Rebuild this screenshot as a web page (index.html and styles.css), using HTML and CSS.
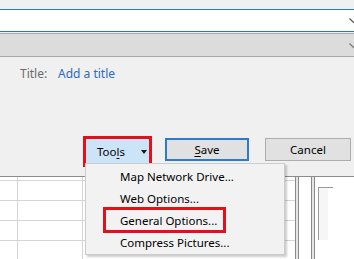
FILE: index.html
```html
<!DOCTYPE html>
<html>
<head>
<meta charset="utf-8">
<link rel="stylesheet" href="styles.css">
</head>
<body>
<div class="dialog">
  <div class="combo">
    <svg class="chev" width="9" height="6" viewBox="0 0 9 6"><path d="M0.5 0.5 L4.5 4.5 L8.5 0.5" fill="none" stroke="#555" stroke-width="1.2"/></svg>
  </div>
  <div class="bar">
    <svg class="chev" width="9" height="6" viewBox="0 0 9 6"><path d="M0.5 0.5 L4.5 4.5 L8.5 0.5" fill="none" stroke="#777" stroke-width="1.2"/></svg>
  </div>
  <div class="title-row">
    <span class="label">Title:</span>
    <span class="link">Add a title</span>
  </div>
  <div class="actions">
    <div class="tools-frame">
      <div class="tools-btn">
        <span>Too<u>l</u>s</span>
        <span class="arrow"></span>
      </div>
    </div>
    <div class="btn save"><u>S</u>ave</div>
    <div class="btn cancel">Cancel</div>
  </div>
</div>
<div class="sheet">
  <div class="grid"></div>
  <div class="split"></div>
  <div class="gap"></div>
  <div class="split"></div>
  <div class="pane"><div class="corner"></div></div>
</div>
<div class="menu">
  <div class="item">Map Network Drive...</div>
  <div class="item">Web Options...</div>
  <div class="item">General Options...</div>
  <div class="item">Compress Pictures...</div>
  <div class="highlight"></div>
</div>
</body>
</html>
```
FILE: styles.css
```css
html, body {
  margin: 0;
  padding: 0;
}
body {
  width: 354px;
  height: 259px;
  overflow: hidden;
  position: relative;
  background: #f0f0f0;
  font-family: "Noto Sans", "DejaVu Sans", sans-serif;
  font-size: 11.5px;
  color: #000;
}
.dialog {
  padding-top: 9px;
  height: 167px;
  border-bottom: 1px solid #8c8c8c;
  box-sizing: content-box;
}
.combo {
  height: 21px;
  background: #fff;
  border-top: 1px solid #2b79c2;
  border-bottom: 1px solid #2b79c2;
  display: flex;
  justify-content: flex-end;
  align-items: center;
}
.bar {
  margin-top: 1px;
  height: 22px;
  background: #dcdcdc;
  border-top: 1px solid #a9a9a9;
  border-bottom: 1px solid #a9a9a9;
  display: flex;
  justify-content: flex-end;
  align-items: center;
}
.chev {
  margin-right: -4px;
  margin-top: 1px;
}
.title-row {
  padding: 9px 0 0 20px;
  height: 16px;
  line-height: 16px;
  display: flex;
  font-size: 12px;
}
.label {
  color: #6b6b6b;
  width: 38px;
}
.link {
  color: #2b6cc4;
}
.actions {
  margin-top: 54px;
  display: flex;
  align-items: flex-start;
  height: 31px;
}
.tools-frame {
  margin-left: 83px;
  width: 69px;
  height: 31px;
  box-sizing: border-box;
  border: 3px solid #e3101b;
  background: #cce4f7;
}
.tools-btn {
  height: 25px;
  display: flex;
  align-items: center;
  padding-left: 11px;
  line-height: 16px;
}
.tools-btn u {
  text-underline-offset: 2px;
}
.arrow {
  margin-left: 16px;
  width: 0;
  height: 0;
  border-left: 3.5px solid transparent;
  border-right: 3.5px solid transparent;
  border-top: 4px solid #1a1a1a;
}
.btn {
  height: 23px;
  box-sizing: border-box;
  background: #e1e1e1;
  display: flex;
  align-items: center;
  justify-content: center;
  margin-top: 2px;
}
.save {
  margin-left: 13px;
  width: 84px;
  border: 2px solid #2d7bd0;
}
.save u {
  text-underline-offset: 2px;
}
.cancel {
  margin-left: 16px;
  width: 86px;
  border: 1px solid #adadad;
}
.sheet {
  display: flex;
  height: 82px;
  background: #fff;
}
.grid {
  width: 295px;
  background-image:
    linear-gradient(to right, transparent 17px, #d4d4d4 17px, #d4d4d4 18px, transparent 18px),
    linear-gradient(to right, transparent 82px, #d4d4d4 82px, #d4d4d4 83px, transparent 83px),
    repeating-linear-gradient(to bottom, transparent 0, transparent 19px, #d4d4d4 19px, #d4d4d4 20px);
  background-position: 0 0, 0 0, 0 -16px;
}
.split {
  width: 2px;
  border-left: 1px solid #8a8a8a;
  border-right: 1px solid #8a8a8a;
  background: #e4e4e4;
}
.gap {
  width: 12px;
}
.pane {
  flex: 1;
  padding: 10px 0 0 3px;
}
.corner {
  width: 15px;
  height: 53px;
  border-left: 1px solid #9a9a9a;
  border-top: 1px solid #9a9a9a;
  background: linear-gradient(to right, #f6f6f6 9px, #fff 9px);
  box-sizing: border-box;
}
.menu {
  position: absolute;
  left: 85px;
  top: 163px;
  width: 200px;
  height: 92px;
  box-sizing: border-box;
  padding: 2px 0;
  background: #f2f2f2;
  border: 1px solid #cccccc;
  box-shadow: 2px 2px 2px rgba(0, 0, 0, 0.2);
}
.item {
  height: 22px;
  line-height: 22px;
  padding-left: 34px;
}
.highlight {
  position: absolute;
  left: 17px;
  top: 43px;
  width: 123px;
  height: 26px;
  box-sizing: border-box;
  border: 3px solid #e3101b;
}
```
